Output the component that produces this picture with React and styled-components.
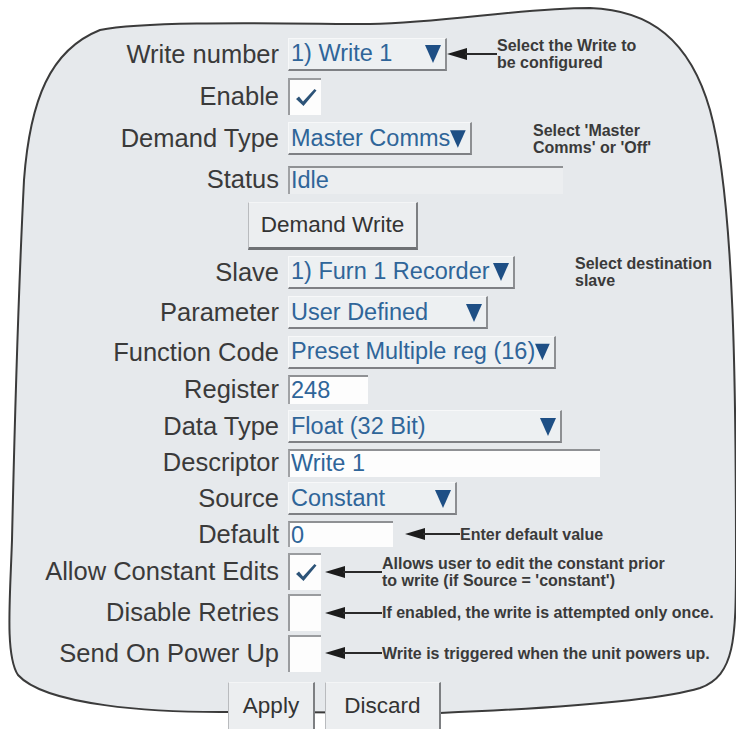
import React from "react";
import styled, { createGlobalStyle } from "styled-components";

const Global = createGlobalStyle`
  html, body {
    margin: 0;
    padding: 0;
    background: #ffffff;
    overflow: hidden;
  }
`;

const Page = styled.div`
  position: relative;
  width: 736px;
  height: 729px;
  overflow: hidden;
  font-family: "Liberation Sans", Arial, sans-serif;
`;

const Outline = styled.svg`
  position: absolute;
  left: 0;
  top: 0;
`;

const Form = styled.div`
  position: relative;
  display: flex;
  flex-direction: column;
  padding-top: 33px;
`;

const Row = styled.div`
  display: grid;
  grid-template-columns: 279px 1fr;
  column-gap: 9px;
  align-items: center;
  height: ${(p) => p.$h}px;
`;

const Label = styled.span`
  text-align: right;
  font-size: 25.5px;
  color: #3a3a3a;
  white-space: nowrap;
`;

const Cell = styled.div`
  display: flex;
  align-items: center;
`;

const Select = styled.div`
  box-sizing: border-box;
  width: ${(p) => p.$w}px;
  height: 33px;
  display: flex;
  align-items: center;
  justify-content: space-between;
  padding: 0 4px 0 2px;
  background: #edf0f2;
  border-top: 1px solid #f7f8f9;
  border-left: 1px solid #f7f8f9;
  border-right: 2px solid #8d8f92;
  border-bottom: 2px solid #7e8084;
`;

const Value = styled.span`
  font-size: 23.5px;
  color: #2f6599;
  white-space: nowrap;
`;

const TextBox = styled.div`
  box-sizing: border-box;
  width: ${(p) => p.$w}px;
  height: ${(p) => p.$h || 28}px;
  display: flex;
  align-items: center;
  padding-left: 1px;
  background: ${(p) => (p.$disabled ? "#eceef0" : "#fdfdfd")};
  border-top: 2px solid #8f9194;
  border-left: 2px solid #a0a2a5;
`;

const CheckBox = styled.div`
  box-sizing: border-box;
  width: 33px;
  height: 37px;
  display: flex;
  align-items: center;
  justify-content: center;
  background: #fdfdfd;
  border-top: 2px solid #9a9c9f;
  border-left: 2px solid #9a9c9f;
`;

const Note = styled.div`
  display: flex;
  align-items: center;
  margin-left: ${(p) => p.$gap || 0}px;
`;

const NoteText = styled.span`
  font-size: 16px;
  font-weight: bold;
  line-height: 17px;
  color: #3a3a3a;
  white-space: nowrap;
`;

const ButtonRow = styled.div`
  display: flex;
  align-items: center;
  height: ${(p) => p.$h}px;
  padding-left: ${(p) => p.$left}px;
  gap: 10px;
  margin-top: ${(p) => p.$top || 0}px;
`;

const Button = styled.div`
  box-sizing: border-box;
  width: ${(p) => p.$w}px;
  height: ${(p) => p.$h}px;
  display: flex;
  align-items: center;
  justify-content: center;
  font-size: 22.5px;
  color: #333333;
  background: #eceef0;
  border-top: 1px solid #f4f5f6;
  border-left: 1px solid #b9bbbe;
  border-right: 2px solid #7d7f82;
  border-bottom: 3px solid #6f7174;
`;

function Drop() {
  return (
    <svg width="16" height="19" viewBox="0 0 16 19">
      <polygon points="0,1 16,1 8,19" fill="#1e4f85" />
    </svg>
  );
}

function Tick() {
  return (
    <svg width="22" height="19" viewBox="0 0 22 19">
      <path d="M1 11 L4 8.5 L8 13.5 L19.5 1 L21.5 2.5 L8.5 18 Z" fill="#2c5378" />
    </svg>
  );
}

function Arrow({ width }) {
  return (
    <svg width={width} height="14" viewBox={`0 0 ${width} 14`}>
      <polygon points="0,7 20,1 20,13" fill="#1c1c1c" />
      <line x1="18" y1="7" x2={width} y2="7" stroke="#2a2a2a" strokeWidth="2" />
    </svg>
  );
}

function Field({ label, h, children }) {
  return (
    <Row $h={h}>
      <Label>{label}</Label>
      <Cell>{children}</Cell>
    </Row>
  );
}

function Dropdown({ w, value }) {
  return (
    <Select $w={w}>
      <Value>{value}</Value>
      <Drop />
    </Select>
  );
}

export default function App() {
  return (
    <Page>
      <Global />
      <Outline width="736" height="729" viewBox="0 0 736 729">
        <path
          d="M235 712 C150 713 45 705 18 675 C5 655 10 600 12 540 C14 450 18 300 24 180 C30 100 50 50 100 30 C150 20 300 24 370 24 C450 22 520 8 590 8 C650 10 690 40 710 110 C735 200 736 400 736 560 C736 640 735 675 700 688 C660 700 560 708 440 713 Z"
          fill="#e6e9ec"
          stroke="#3b3b3b"
          strokeWidth="2"
        />
      </Outline>
      <Form>
        <Field label="Write number" h={42}>
          <Dropdown w={159} value="1) Write 1" />
          <Note>
            <Arrow width={50} />
            <NoteText>
              Select the Write to
              <br />
              be configured
            </NoteText>
          </Note>
        </Field>
        <Field label="Enable" h={43}>
          <CheckBox>
            <Tick />
          </CheckBox>
        </Field>
        <Field label="Demand Type" h={41}>
          <Dropdown w={184} value="Master Comms" />
          <Note $gap={61}>
            <NoteText>
              Select 'Master
              <br />
              Comms' or 'Off'
            </NoteText>
          </Note>
        </Field>
        <Field label="Status" h={41}>
          <TextBox $w={275} $disabled>
            <Value>Idle</Value>
          </TextBox>
        </Field>
        <ButtonRow $h={52} $left={248}>
          <Button $w={170} $h={48}>Demand Write</Button>
        </ButtonRow>
        <Field label="Slave" h={40}>
          <Dropdown w={227} value="1) Furn 1 Recorder" />
          <Note $gap={60}>
            <NoteText>
              Select destination
              <br />
              slave
            </NoteText>
          </Note>
        </Field>
        <Field label="Parameter" h={41}>
          <Dropdown w={200} value="User Defined" />
        </Field>
        <Field label="Function Code" h={38}>
          <Dropdown w={268} value="Preset Multiple reg (16)" />
        </Field>
        <Field label="Register" h={37}>
          <TextBox $w={80} $h={29}>
            <Value>248</Value>
          </TextBox>
        </Field>
        <Field label="Data Type" h={37}>
          <Dropdown w={274} value="Float (32 Bit)" />
        </Field>
        <Field label="Descriptor" h={35}>
          <TextBox $w={312}>
            <Value>Write 1</Value>
          </TextBox>
        </Field>
        <Field label="Source" h={37}>
          <Dropdown w={169} value="Constant" />
        </Field>
        <Field label="Default" h={34}>
          <TextBox $w={105} $h={26}>
            <Value>0</Value>
          </TextBox>
          <Note $gap={12}>
            <Arrow width={55} />
            <NoteText>Enter default value</NoteText>
          </Note>
        </Field>
        <Field label="Allow Constant Edits" h={41}>
          <CheckBox>
            <Tick />
          </CheckBox>
          <Note $gap={4}>
            <Arrow width={57} />
            <NoteText>
              Allows user to edit the constant prior
              <br />
              to write (if Source = 'constant')
            </NoteText>
          </Note>
        </Field>
        <Field label="Disable Retries" h={41}>
          <CheckBox />
          <Note $gap={4}>
            <Arrow width={57} />
            <NoteText>If enabled, the write is attempted only once.</NoteText>
          </Note>
        </Field>
        <Field label="Send On Power Up" h={40}>
          <CheckBox />
          <Note $gap={4}>
            <Arrow width={57} />
            <NoteText>Write is triggered when the unit powers up.</NoteText>
          </Note>
        </Field>
        <ButtonRow $h={50} $left={228} $top={9}>
          <Button $w={87} $h={50}>Apply</Button>
          <Button $w={116} $h={50}>Discard</Button>
        </ButtonRow>
      </Form>
    </Page>
  );
}
